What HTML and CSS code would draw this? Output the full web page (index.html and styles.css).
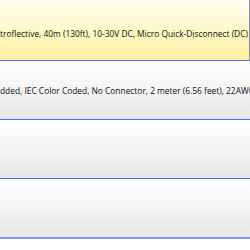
FILE: index.html
```html
<!DOCTYPE html>
<html>
<head>
<meta charset="utf-8">
<link rel="stylesheet" href="styles.css">
</head>
<body>
<div class="list">
  <div class="row row-active"><span class="label">troflective, 40m (130ft), 10-30V DC, Micro Quick-Disconnect (DC)</span></div>
  <div class="row"><span class="label">dded, IEC Color Coded, No Connector, 2 meter (6.56 feet), 22AWG</span></div>
  <div class="row"></div>
  <div class="row row-last"></div>
</div>
</body>
</html>
```
FILE: styles.css
```css
html, body {
  margin: 0;
  padding: 0;
  background: #ffffff;
}
.list {
  width: 250px;
  display: flex;
  flex-direction: column;
  font-family: "Open Sans", "Noto Sans", sans-serif;
  font-size: 8.4px;
  color: #111111;
}
.row {
  box-sizing: border-box;
  height: 59px;
  display: flex;
  align-items: center;
  overflow: hidden;
  white-space: nowrap;
  background: linear-gradient(to bottom, #ffffff 0%, #f4f4f4 50%, #e6e6e6 100%);
  border-bottom: 1px solid #4d6bf2;
}
.row-active {
  height: 61px;
  padding-top: 7px;
  background: linear-gradient(to bottom, #fffdf0 0%, #fff8c8 50%, #fdf0a2 100%);
  border-right: 1px solid #7a8ad8;
}
.row-last {
  border-bottom: 2px solid #8696f5;
  height: 60px;
}
.label {
  display: block;
}
```
